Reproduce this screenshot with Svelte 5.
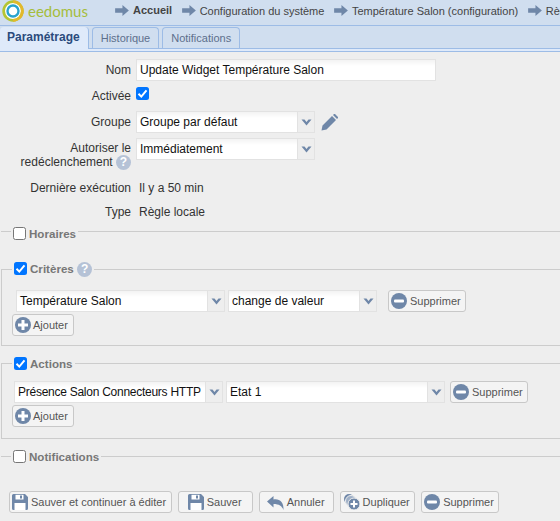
<script>
	const crumbs = ['Accueil', 'Configuration du système', 'Température Salon (configuration)', 'Règle'];
	const tabs = ['Paramétrage', 'Historique', 'Notifications'];
</script>

{#snippet chevron()}
	<span class="arrow">
		<svg width="11" height="7" viewBox="0 0 11 7"><path d="M0.5 0.5h3l2 2.5 2-2.5h3l-5 6z" fill="#6f87a8" /></svg>
	</span>
{/snippet}

{#snippet combo(text, width)}
	<span class="combo" style="width: {width}px">
		<span class="comboText">{text}</span>
		{@render chevron()}
	</span>
{/snippet}

{#snippet minus()}
	<svg class="ico" width="16" height="16" viewBox="0 0 16 16"><circle cx="8" cy="8" r="8" fill="#6f87a8" /><rect x="3" y="6.500" width="10" height="3" rx="1" fill="#fff" /></svg>
{/snippet}

{#snippet plus()}
	<svg class="ico" width="16" height="16" viewBox="0 0 16 16"><circle cx="8" cy="8" r="8" fill="#6f87a8" /><path d="M6.500 3h3v3.500H13v3H9.500V13h-3V9.500H3v-3h3.500z" fill="#fff" /></svg>
{/snippet}

{#snippet save()}
	<svg class="ico" width="16" height="16" viewBox="0 0 16 16"><path d="M0 1.500A1.500 1.500 0 0 1 1.500 0H13l3 3v11.500a1.500 1.500 0 0 1-1.500 1.500h-13A1.500 1.500 0 0 1 0 14.500z" fill="#6f87a8" /><rect x="3.500" y="0.800" width="8" height="4.700" fill="#fff" /><rect x="8" y="1.500" width="2" height="3" fill="#6f87a8" /><rect x="2.500" y="9" width="11" height="7" fill="#fff" /></svg>
{/snippet}

{#snippet check()}
	<span class="check on">
		<svg width="13" height="13" viewBox="0 0 13 13"><path d="M2.500 6.800l2.800 2.800 5.200-6.200" fill="none" stroke="#fff" stroke-width="2" /></svg>
	</span>
{/snippet}

{#snippet help()}
	<span class="help">?</span>
{/snippet}

<div class="page">
	<header class="top">
		<div class="logo">
			<svg width="22" height="22" viewBox="0 0 24 24">
				<circle cx="12" cy="12" r="10.200" fill="#fff" stroke="#b5c534" stroke-width="3" />
				<path d="M12 1.800a10.200 10.200 0 0 1 0 20.400" fill="none" stroke="#e3b82c" stroke-width="3" />
				<circle cx="12" cy="12" r="6" fill="#fff" stroke="#2aa3cf" stroke-width="2.600" />
			</svg>
			<span class="logoText">eedomus</span>
		</div>
		<nav class="crumbs">
			{#each crumbs as c, i}
				<span class="crumb" class:first={i === 0}>
					<svg width="14" height="11" viewBox="0 0 15 12"><path d="M0 3.500h8V0l7 6-7 6V8.500H0z" fill="#6f87a8" /></svg>
					{c}
				</span>
			{/each}
		</nav>
	</header>

	<div class="tabs">
		{#each tabs as t, i}
			<div class="tab" class:active={i === 0}>{t}</div>
		{/each}
	</div>
	<div class="tabRule"></div>

	<form class="form">
		<div class="row rowName">
			<span class="label">Nom</span>
			<span class="input">Update Widget Température Salon</span>
		</div>
		<div class="row rowActive">
			<span class="label">Activée</span>
			{@render check()}
		</div>
		<div class="row rowGroup">
			<span class="label">Groupe</span>
			{@render combo('Groupe par défaut', 179)}
			<svg class="pencil" width="17" height="17" viewBox="0 0 17 17"><path d="M0.500 16.500l1-5L11 2l4 4-9.500 9.500z M12 1l1-1h1l3 3v1l-1 1z" fill="#6f87a8" /></svg>
		</div>
		<div class="row rowRetrigger">
			<span class="label">Autoriser le<br />redéclenchement {@render help()}</span>
			{@render combo('Immédiatement', 179)}
		</div>
		<div class="row rowInfo">
			<span class="label">Dernière exécution</span>
			<span class="value">Il y a 50 min</span>
		</div>
		<div class="row rowInfo">
			<span class="label">Type</span>
			<span class="value">Règle locale</span>
		</div>

		<fieldset class="closed first">
			<legend><span class="check"></span>Horaires</legend>
		</fieldset>

		<fieldset class="open criteria">
			<legend>{@render check()}Critères {@render help()}</legend>
			<div class="line">
				{@render combo('Température Salon', 209)}
				{@render combo('change de valeur', 149)}
				<button type="button" class="btn gapLeft">{@render minus()}Supprimer</button>
			</div>
			<button type="button" class="btn add">{@render plus()}Ajouter</button>
		</fieldset>

		<fieldset class="open actions">
			<legend>{@render check()}Actions</legend>
			<div class="line">
				{@render combo('Présence Salon Connecteurs HTTP', 209)}
				{@render combo('Etat 1', 219)}
				<button type="button" class="btn">{@render minus()}Supprimer</button>
			</div>
			<button type="button" class="btn add">{@render plus()}Ajouter</button>
		</fieldset>

		<fieldset class="closed notif">
			<legend><span class="check"></span>Notifications</legend>
		</fieldset>

		<div class="footer">
			<button type="button" class="btn saveMore">{@render save()}Sauver et continuer à éditer</button>
			<button type="button" class="btn">{@render save()}Sauver</button>
			<button type="button" class="btn">
				<svg class="ico" width="17" height="15" viewBox="0 0 17 15"><path d="M0 6.500L6.500 1v3.500C12.500 3.500 17 7 16.500 15 15 11 12 9 6.500 9v3.500z" fill="#6f87a8" /></svg>Annuler
			</button>
			<button type="button" class="btn">
				<svg class="ico" width="16" height="16" viewBox="0 0 16 16"><circle cx="5" cy="5" r="5" fill="#6f87a8" /><circle cx="7" cy="7" r="5.500" fill="#9fb0c7" stroke="#eee" stroke-width="1" /><circle cx="10" cy="10" r="6" fill="#6f87a8" stroke="#eee" stroke-width="1" /><path d="M9 6.500h2V9h2.500v2H11v2.500H9V11H6.500V9H9z" fill="#fff" /></svg>Dupliquer
			</button>
			<button type="button" class="btn">{@render minus()}Supprimer</button>
		</div>
	</form>
</div>

<style>
	:global(body) {
		background: #eeeeee;
		overflow: hidden;
	}

	.page {
		width: 560px;
		height: 521px;
		overflow: hidden;
		font-family: 'Liberation Sans', Arial, sans-serif;
		font-size: 12px;
		color: #333;
		background: #eeeeee;
	}

	.top {
		display: flex;
		align-items: center;
		height: 21px;
		padding-bottom: 4px;
		background: #d0deef;
		border-bottom: 1px solid #9dbce6;
		white-space: nowrap;
	}

	.logo {
		display: flex;
		align-items: center;
		width: 115px;
		flex: none;
		padding-left: 2px;
		box-sizing: border-box;
	}

	.logoText {
		font-family: 'Lato', sans-serif;
		font-size: 15px;
		color: #a5bd3c;
		margin-left: 4px;
	}

	.crumbs {
		display: flex;
		gap: 9.500px;
		color: #444;
		font-size: 11px;
	}

	.crumb {
		display: flex;
		align-items: center;
		gap: 4px;
	}

	.crumb.first {
		font-weight: bold;
	}

	.tabs {
		display: flex;
		align-items: flex-end;
		gap: 3px;
		height: 22px;
		background: #d0deef;
		border-bottom: 1px solid #9dbce6;
	}

	.tab {
		height: 21px;
		line-height: 21px;
		padding: 0 8px;
		border: 1px solid #9dbce6;
		border-bottom: none;
		border-radius: 4px 4px 0 0;
		color: #5d6f8c;
		font-size: 11px;
		box-sizing: border-box;
	}

	.tab.active {
		height: 22px;
		padding: 0 8px 0 7px;
		margin-right: -1px;
		background: #dfeafa;
		color: #2b4a7c;
		font-weight: bold;
		font-size: 12px;
		border-top: none;
		border-left: none;
		margin-bottom: -1px;
	}

	.tab.active + .tab {
		margin-left: 1px;
	}

	.tabRule {
		height: 2px;
		background: #dfeafa;
		border-bottom: 1px solid #9dbce6;
	}

	.form {
		display: block;
		padding-top: 7px;
	}

	.row {
		display: grid;
		grid-template-columns: 131px auto auto;
		justify-content: start;
		column-gap: 5px;
		align-items: center;
	}

	.label {
		text-align: right;
		color: #333;
		line-height: 14px;
	}

	.rowName {
		height: 22px;
	}

	.input {
		width: 300px;
		height: 22px;
		line-height: 21px;
		box-sizing: border-box;
		padding-left: 3px;
		background: linear-gradient(#f3f3f3, #fff 6px);
		border: 1px solid #e2e2e2;
		color: #111;
	}

	.rowActive {
		height: 24px;
	}

	.rowActive .label {
		padding-top: 6px;
	}

	.rowGroup {
		height: 26px;
		margin-top: 4px;
	}

	.rowRetrigger {
		height: 38px;
		margin-top: 3px;
		align-items: start;
	}

	.rowInfo {
		height: 24px;
	}

	.rowRetrigger .label {
		padding-top: 3px;
	}

	.value {
		padding-left: 3px;
		color: #333;
	}

	.combo {
		display: inline-flex;
		align-items: stretch;
		height: 22px;
		box-sizing: border-box;
		background: linear-gradient(#f3f3f3, #fff 6px);
		border: 1px solid #e2e2e2;
		color: #111;
	}

	.comboText {
		flex: 1;
		line-height: 20px;
		padding-left: 3px;
		white-space: nowrap;
		overflow: hidden;
	}

	.actions .combo:first-child .comboText {
		letter-spacing: -0.260px;
	}

	.arrow {
		width: 16px;
		flex: none;
		display: flex;
		align-items: center;
		justify-content: center;
		background: #eeeeee;
		border-left: 1px solid #e2e2e2;
	}

	.pencil {
		margin-left: 1px;
	}

	.check {
		display: inline-flex;
		align-items: center;
		justify-content: center;
		width: 13px;
		height: 13px;
		box-sizing: border-box;
		border: 1px solid #767676;
		border-radius: 2.500px;
		background: #fff;
		vertical-align: -2px;
		margin-right: 3px;
	}

	.check.on {
		background: #0075ff;
		border: none;
	}

	.help {
		display: inline-block;
		width: 15px;
		height: 15px;
		line-height: 15px;
		border-radius: 50%;
		background: #b5c2d6;
		color: #fff;
		font-weight: bold;
		font-size: 12px;
		text-align: center;
	}

	fieldset {
		margin: 0;
		min-width: 0;
		border: 2px solid #cccccc;
		border-width: 1px 0 0 1px;
		box-sizing: border-box;
		margin-left: 1px;
		width: 600px;
	}

	legend {
		margin-left: 10px;
		padding: 0 2px;
		font-weight: bold;
		color: #777;
		font-size: 11.600px;
	}

	.closed {
		height: 14px;
		border-left: none;
		padding: 0;
	}

	.first {
		margin-top: -1px;
		height: 16px;
	}

	.first legend {
		padding-top: 4px;
	}

	.open {
		border-width: 1px;
		padding: 13px 0 0 0;
	}

	.criteria {
		margin-top: 22px;
		height: 84px;
	}

	.actions {
		margin-top: 11px;
		height: 82px;
		padding-top: 11px;
	}

	.notif {
		margin-top: 11px;
	}

	.line {
		display: flex;
		align-items: center;
		gap: 3px;
		padding-left: 14px;
	}

	.actions .line {
		padding-left: 12px;
	}

	.btn {
		display: inline-flex;
		align-items: center;
		justify-content: center;
		height: 22px;
		padding: 0 4px 0 2px;
		box-sizing: border-box;
		border: 1px solid #c8c8c8;
		border-radius: 3px;
		background: #f4f4f4;
		color: #555;
		font-family: inherit;
		font-size: 11px;
		white-space: nowrap;
	}

	.ico {
		margin-right: 3px;
		flex: none;
	}

	.add {
		display: flex;
		margin-top: 2px;
		margin-left: 10px;
		padding-right: 5px;
	}

	.add .ico {
		margin-right: 2px;
	}

	.gapLeft {
		margin-left: 8px;
	}

	.actions .line .btn {
		margin-left: 2px;
	}

	.footer {
		display: flex;
		gap: 6px;
		padding: 0 0 0 9px;
		margin-top: 27px;
	}

	.footer .btn {
		min-width: 75px;
	}

	.footer .saveMore {
		padding-right: 5px;
	}
</style>
